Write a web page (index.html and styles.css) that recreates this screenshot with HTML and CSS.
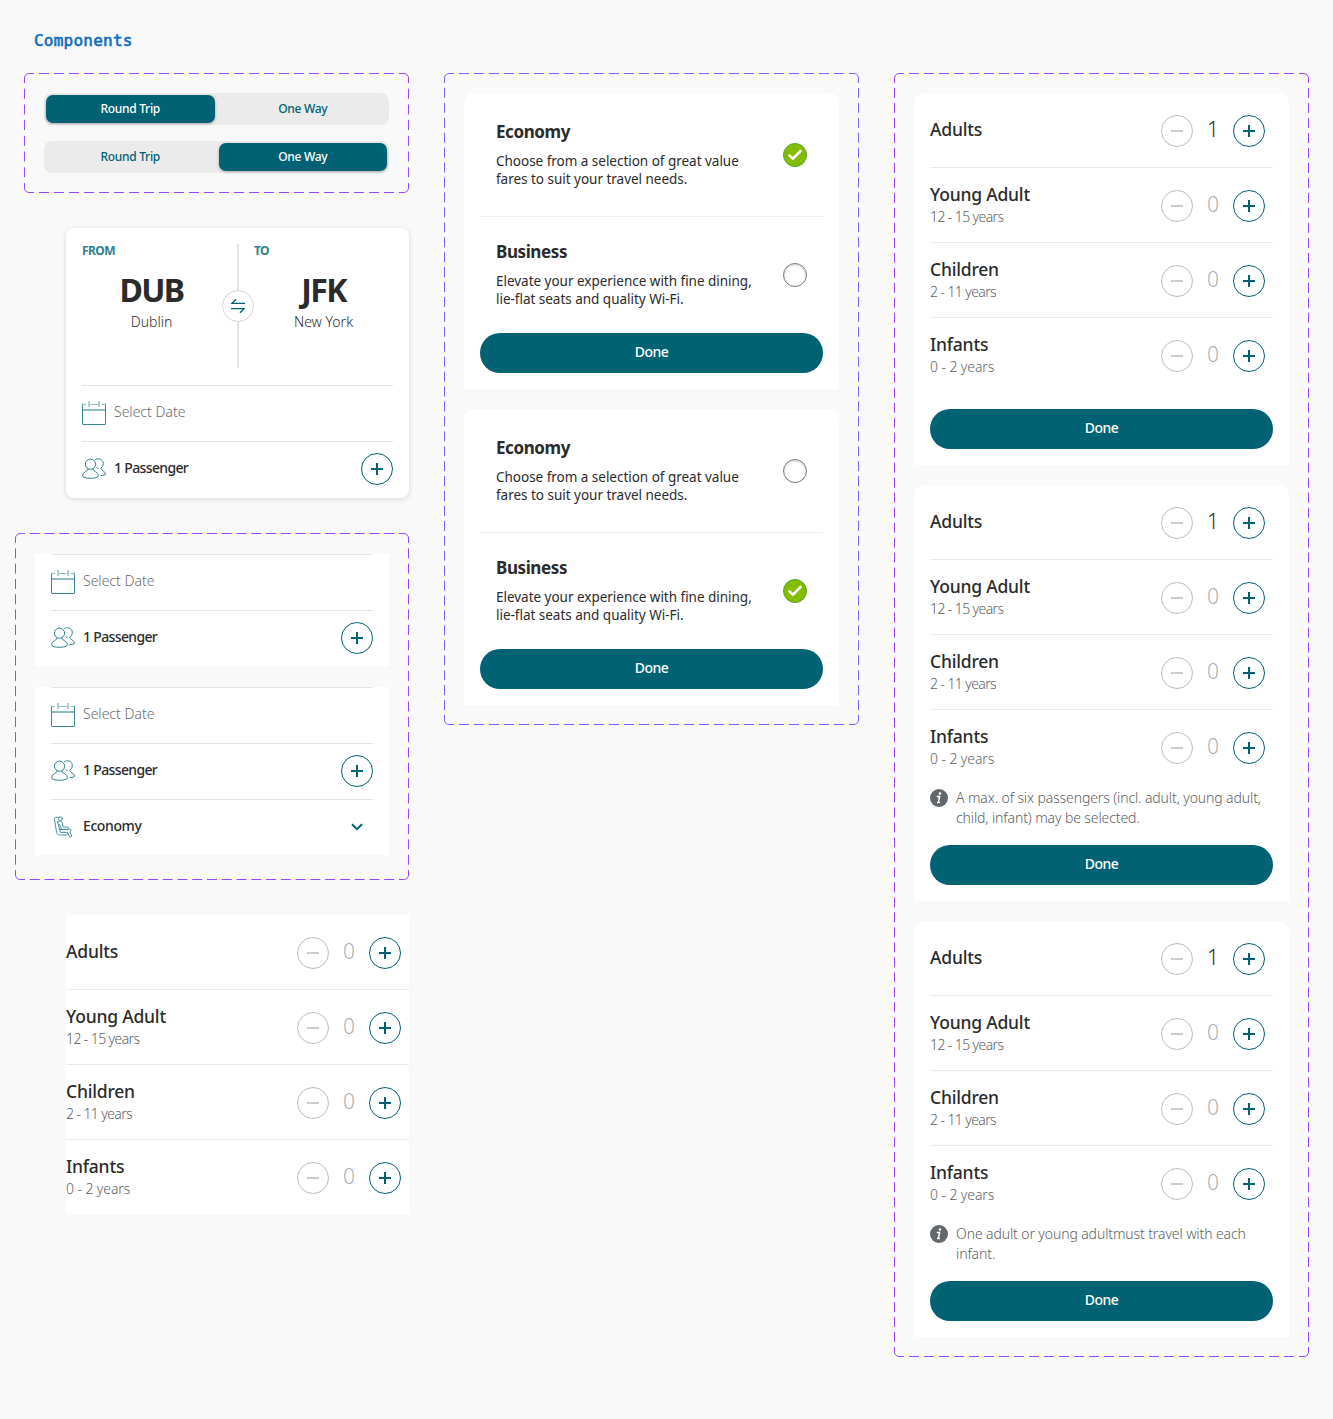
FILE: index.html
```html
<!DOCTYPE html>
<html lang="en">
<head>
<meta charset="utf-8">
<title>Components</title>
<link rel="stylesheet" href="styles.css">
</head>
<body>
<svg class="sprite" aria-hidden="true">
  <symbol id="plus" viewBox="0 0 32 32"><circle cx="16" cy="16" r="15.5" fill="none" stroke="#006272"/><path d="M10 16h12M16 10v12" stroke="#006272" stroke-width="2" fill="none"/></symbol>
  <symbol id="minus" viewBox="0 0 32 32"><circle cx="16" cy="16" r="15.5" fill="none" stroke="#bdbdbd"/><path d="M10 16h12" stroke="#bdbdbd" stroke-width="1.5" fill="none"/></symbol>
  <symbol id="calendar" viewBox="0 0 24 24"><g fill="none" stroke="#3b8691"><path d="M.5 2.5V23q0 .5.5.5h22q.5 0 .5-.5V2.5"/><g stroke="#8fbcc3"><path d="M0 3.5h4M8 3.5h8M20 3.5h4"/><path d="M7 0v6M17 0v6" stroke-width="1.4"/><path d="M1 9h22" stroke-width="2"/></g></g></symbol>
  <symbol id="people" viewBox="0 0 24 24"><g fill="none" stroke="#2f7f8b"><circle cx="8.5" cy="7.2" r="5.1"/><path d="M6.300 11.800C6.300 14.500.500 14.500.500 18.800c0 3.300 16 3.300 16 0 0-4.300-5.800-4.300-5.800-7"/><path d="M13.200 2.800C15.500.9 21.300 1.500 21.300 6.500c0 2-1 3.700-2.500 4.600 0 2.600 4.700 2.900 4.700 6.200 0 .7-2.500 1.300-5 1.300M14.500 10.500c.7.500 1.300.8 2 .9"/></g></symbol>
  <symbol id="seat" viewBox="0 0 24 24"><g fill="none" stroke="#3b8691" stroke-width=".9" stroke-linejoin="round" stroke-linecap="round"><circle cx="9.400" cy="3.700" r="2"/><path d="M7.300 2.300 4.500 2.500c-1 .1-1.300.8-1.100 1.800L5.300 15.500c.3 2.500 1 4.500 3 4.500h6.700c2 0 2-2.600 0-2.600H9.500L6.500 6.500"/><path d="M7 7c1-2 4-1.500 4.200 1l.8 4h4.500c1.300 0 1.300 2.300 0 2.300h-6L8.500 9.500M8.500 14.500h8.500c1.300 0 1.700-.8 2.500-.4 1 .5 0 2-.6 3l1.900 4c-.7 1.200-2.300.8-2.300.8l-1.800-4.300"/></g></symbol>
  <symbol id="chevron" viewBox="0 0 12 8"><path d="M1 1.200 6 6.200 11 1.200" fill="none" stroke="#006272" stroke-width="2"/></symbol>
  <symbol id="swap" viewBox="0 0 32 32"><circle cx="16" cy="16" r="15.5" fill="#fff" stroke="#d6d6d6"/><path d="M23 13.300H10l4-4M9 18.700h13l-4 4" fill="none" stroke="#006272" stroke-width="1.300"/></symbol>
  <symbol id="on" viewBox="0 0 24 24"><circle cx="12" cy="12" r="11.5" fill="#84bd00" stroke="#55a52c"/><path d="m6.500 12.500 3.500 3.200 7.500-7.700" fill="none" stroke="#fff" stroke-width="2.600" stroke-linecap="round" stroke-linejoin="round"/></symbol>
  <symbol id="info" viewBox="0 0 18 18"><circle cx="9" cy="9" r="9" fill="#63666a"/><circle cx="10" cy="4.500" r="1.300" fill="#fff"/><path d="M6.800 7.600h2.800L8.500 12.700q-.1.800.9.600M7 13.500h2.900" fill="none" stroke="#fff" stroke-width="1.500"/></symbol>
</svg>

<h1 class="page-title">Components</h1>
<main class="board">
  <div class="column column-first">
    <section class="frame frame-toggle">
      <div class="toggle"><span class="tab active">Round Trip</span><span class="tab">One Way</span></div>
      <div class="toggle"><span class="tab">Round Trip</span><span class="tab active">One Way</span></div>
    </section>

    <section class="booking">
      <div class="route">
        <div class="stop"><span class="stop-label">FROM</span><strong class="code">DUB</strong><span class="city">Dublin</span></div>
        <div class="route-line"><svg class="swap"><use href="#swap"/></svg></div>
        <div class="stop"><span class="stop-label">TO</span><strong class="code">JFK</strong><span class="city">New York</span></div>
      </div>
      <div class="field"><svg class="i24"><use href="#calendar"/></svg><span class="placeholder">Select Date</span></div>
      <div class="field"><svg class="i24"><use href="#people"/></svg><span class="value passengers">1 Passenger</span><svg class="i32"><use href="#plus"/></svg></div>
    </section>

    <section class="frame frame-fields">
      <div class="fields">
        <div class="field"><svg class="i24"><use href="#calendar"/></svg><span class="placeholder">Select Date</span></div>
        <div class="field"><svg class="i24"><use href="#people"/></svg><span class="value passengers">1 Passenger</span><svg class="i32"><use href="#plus"/></svg></div>
      </div>
      <div class="fields">
        <div class="field"><svg class="i24"><use href="#calendar"/></svg><span class="placeholder">Select Date</span></div>
        <div class="field"><svg class="i24"><use href="#people"/></svg><span class="value passengers">1 Passenger</span><svg class="i32"><use href="#plus"/></svg></div>
        <div class="field"><svg class="i24"><use href="#seat"/></svg><span class="value">Economy</span><svg class="chevron"><use href="#chevron"/></svg></div>
      </div>
    </section>

    <section class="counters standalone" data-adults="0"></section>
  </div>

  <div class="column">
    <section class="frame frame-cabin">
      <div class="card">
        <div class="option"><div class="option-text"><h2>Economy</h2><p>Choose from a selection of great value<br>fares to suit your travel needs.</p></div><svg class="i24"><use href="#on"/></svg></div>
        <div class="option"><div class="option-text"><h2>Business</h2><p>Elevate your experience with fine dining,<br>lie-flat seats and quality Wi-Fi.</p></div><span class="radio"></span></div>
        <button class="done">Done</button>
      </div>
      <div class="card">
        <div class="option"><div class="option-text"><h2>Economy</h2><p>Choose from a selection of great value<br>fares to suit your travel needs.</p></div><span class="radio"></span></div>
        <div class="option"><div class="option-text"><h2>Business</h2><p>Elevate your experience with fine dining,<br>lie-flat seats and quality Wi-Fi.</p></div><svg class="i24"><use href="#on"/></svg></div>
        <button class="done">Done</button>
      </div>
    </section>
  </div>

  <div class="column">
    <section class="frame frame-passengers">
      <div class="card">
        <div class="counters" data-adults="1"></div>
        <button class="done">Done</button>
      </div>
      <div class="card">
        <div class="counters" data-adults="1"></div>
        <div class="note"><svg class="i18"><use href="#info"/></svg><p>A max. of six passengers (incl. adult, young adult,<br>child, infant) may be selected.</p></div>
        <button class="done">Done</button>
      </div>
      <div class="card">
        <div class="counters" data-adults="1"></div>
        <div class="note"><svg class="i18"><use href="#info"/></svg><p>One adult or young adultmust travel with each<br>infant.</p></div>
        <button class="done">Done</button>
      </div>
    </section>
  </div>
</main>
<script src="script.js"></script>
</body>
</html>
```
FILE: styles.css
```css
* { box-sizing: border-box; }
body { margin: 0; min-height: 1419px; background: #f9f9f9; color: #2b2b2b; font-family: "Noto Sans", "Open Sans", sans-serif; font-size: 14px; }
h1, h2, p { margin: 0; }
svg { display: block; flex: none; }
.sprite { display: none; }
.i18 { width: 18px; height: 18px; }
.i24 { width: 24px; height: 24px; }
.i32 { width: 32px; height: 32px; }

.page-title { height: 73px; padding: 30px 0 0 34px; font: 400 16px/22px "DejaVu Sans Mono", monospace; letter-spacing: 0.23px; color: #0d6ebd; -webkit-text-stroke: 0.6px #0d6ebd; }
.board { display: flex; align-items: flex-start; gap: 35px; padding-left: 15px; }
.column { width: 415px; flex: none; }
.column-first { width: 394px; display: flex; flex-direction: column; align-items: flex-end; gap: 35px; }

.frame { position: relative; display: flex; flex-direction: column; padding: 20px; }
.outline { position: absolute; inset: 0; width: 100%; height: 100%; fill: none; stroke: #9747ff; }
.frame-cabin .outline { stroke: #7b61ff; }

.frame-toggle { width: 385px; gap: 16px; }
.toggle { display: flex; gap: 4px; height: 32px; padding: 2px; border-radius: 8px; background: #ebebeb; }
.tab { flex: 1; border-radius: 7px; text-align: center; font-size: 12px; line-height: 27px; font-weight: 500; letter-spacing: -0.3px; color: #006272; }
.tab.active { background: #006272; color: #fff; box-shadow: 0 1px 3px rgba(0, 0, 0, .3); }

.booking { width: 343px; height: 270px; padding: 0 16px 1px; border-radius: 8px; background: #fff; box-shadow: 0 1px 5px rgba(0, 0, 0, .14); }
.route { display: flex; height: 157px; padding: 16px 0 17px; }
.stop { flex: 1; display: flex; flex-direction: column; align-items: center; padding-right: 16px; }
.stop:last-child { padding: 0 0 0 15px; }
.stop-label { align-self: flex-start; font-size: 12px; line-height: 14px; font-weight: 700; letter-spacing: -0.6px; color: #337f8b; }
.code { margin-top: 10px; font-size: 32px; line-height: 44px; letter-spacing: -1.6px; }
.city { line-height: 19px; font-weight: 300; }
.route-line { flex: none; width: 2px; display: flex; align-items: center; justify-content: center; background: #e4e4e4; }
.swap { width: 32px; height: 32px; margin-left: -1px; }

.field { display: flex; align-items: center; gap: 8px; height: 56px; box-shadow: inset 0 1px #e4e4e4; }
.field span { flex: 1; line-height: 20px; margin-top: -2px; }
.placeholder { color: #6b6c70; font-weight: 300; }
.value { font-weight: 500; letter-spacing: -0.4px; }
.passengers { letter-spacing: -0.65px; }
.chevron { width: 12px; height: 8px; margin-right: 10px; }
.frame-fields { width: 394px; gap: 21px; padding: 21px 20px 25px; }
.fields { padding: 0 16px; background: #fff; }

.frame-cabin, .frame-passengers { gap: 20px; }
.card { padding: 0 16px 16px; border-radius: 10px 10px 0 0; background: #fff; }
.option { display: flex; align-items: center; justify-content: space-between; height: 116px; padding: 0 16px; }
.option:first-child { height: 124px; box-shadow: inset 0 -1px #efefef; }
.option-text { margin-top: -2px; }
.option h2 { font-size: 17px; line-height: 24px; font-weight: 700; letter-spacing: -0.4px; }
.option p { margin-top: 8px; font-size: 13.5px; line-height: 18px; font-weight: 400; letter-spacing: -0.02px; }
.radio { width: 24px; height: 24px; border: 1px solid #777; border-radius: 50%; background: #fff; box-shadow: inset 0 1px 3px rgba(0, 0, 0, .2); }
.done { display: block; width: 100%; height: 40px; padding: 0 0 2px; border: 0; border-radius: 20px; background: #006272; color: #fff; font: 500 14px/20px "Noto Sans", "Open Sans", sans-serif; letter-spacing: -0.5px; }

.counters + .done { margin-top: 16px; }
.standalone { width: 343px; background: #fff; }
.counter { display: flex; align-items: center; height: 75px; padding-right: 8px; box-shadow: inset 0 -1px #ebebeb; }
.counter:last-child { box-shadow: none; }
.counter-text { flex: 1; margin-top: -2px; }
.counter-name { display: block; font-size: 17.5px; line-height: 23px; font-weight: 500; letter-spacing: -0.2px; }
.counter-age { display: block; line-height: 21px; font-weight: 300; color: #5c5f63; letter-spacing: -0.1px; }
.counter-age.tight { letter-spacing: -0.6px; }
.count { width: 40px; margin-top: -3px; text-align: center; font-size: 21px; line-height: 24px; font-weight: 300; color: #b0b0b0; }
.count.filled { color: #2b2b2b; }
.note { display: flex; gap: 8px; height: 60px; padding-top: 4px; }
.note p { margin-top: -1px; line-height: 20px; font-weight: 300; letter-spacing: -0.11px; color: #5c5f63; }
```
FILE: script.js
```js
const PASSENGERS = [
  ["Adults", ""],
  ["Young Adult", "12 - 15 years"],
  ["Children", "2 - 11 years"],
  ["Infants", "0 - 2 years"],
];

document.querySelectorAll(".counters").forEach((list) => {
  list.innerHTML = PASSENGERS.map(([name, age], i) => {
    const count = i === 0 ? Number(list.dataset.adults) : 0;
    const ageClass = age.includes("1") ? "counter-age tight" : "counter-age";
    return `<div class="counter">
      <div class="counter-text"><span class="counter-name">${name}</span>${age ? `<span class="${ageClass}">${age}</span>` : ""}</div>
      <svg class="i32"><use href="#minus"/></svg>
      <span class="count${count ? " filled" : ""}">${count}</span>
      <svg class="i32"><use href="#plus"/></svg>
    </div>`;
  }).join("");
});

// Dashes are spread evenly over each side, with a rounded dash on every corner.
const gapFor = (length) => {
  const dashes = Math.round((length + 5) / 15);
  return (length - dashes * 10) / (dashes - 1);
};

document.querySelectorAll(".frame").forEach((frame) => {
  const w = frame.offsetWidth;
  const h = frame.offsetHeight;
  const gx = gapFor(w);
  const gy = gapFor(h);
  const r = w - 0.5;
  const b = h - 0.5;
  frame.insertAdjacentHTML("beforeend", `<svg class="outline">
    <path d="M${10 + gx} .5H${w - 10}M${10 + gx} ${b}H${w - 10}" stroke-dasharray="10 ${gx}"/>
    <path d="M.5 ${10 + gy}V${h - 10}M${r} ${10 + gy}V${h - 10}" stroke-dasharray="10 ${gy}"/>
    <path d="M.5 10V5A4.5 4.5 0 0 1 5 .5H10M${w - 10} .5H${w - 5}A4.5 4.5 0 0 1 ${r} 5V10M${r} ${h - 10}V${h - 5}A4.5 4.5 0 0 1 ${w - 5} ${b}H${w - 10}M10 ${b}H5A4.5 4.5 0 0 1 .5 ${h - 5}V${h - 10}"/>
  </svg>`);
});
```
